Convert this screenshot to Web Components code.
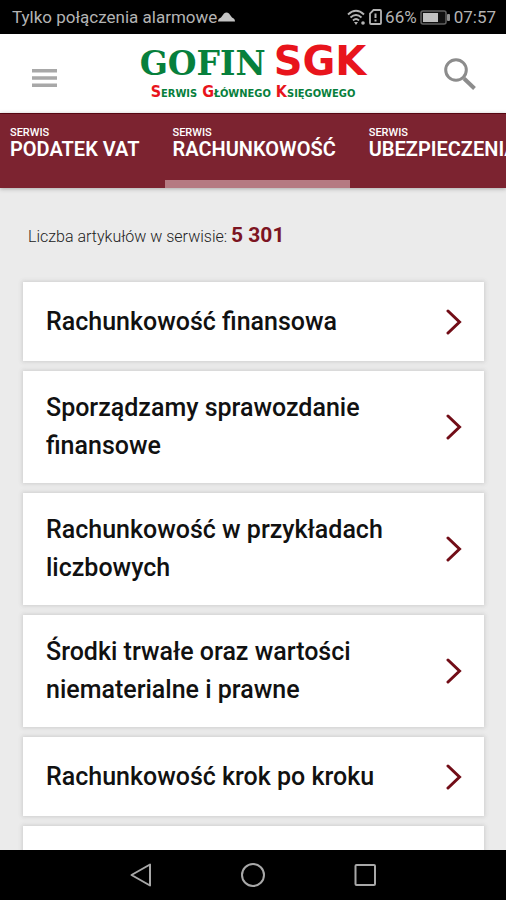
<!DOCTYPE html>
<html lang="pl">
<head>
<meta charset="utf-8">
<meta name="viewport" content="width=device-width, initial-scale=1">
<title>GOFIN SGK - Rachunkowość</title>
<style>
  body {
    margin: 0;
    height: 100vh;
    display: flex;
    flex-direction: column;
    overflow: hidden;
    background: #ebebeb;
    color: #111;
    font-family: Roboto, "Liberation Sans", sans-serif;
  }
  main {
    flex: 1;
    min-height: 0;
    overflow: hidden;
  }
</style>
</head>
<body>
  <status-bar battery="66%" time="07:57">Tylko połączenia alarmowe</status-bar>
  <app-header></app-header>
  <tab-bar>
    <tab-item kicker="SERWIS">PODATEK VAT</tab-item>
    <tab-item kicker="SERWIS" active>RACHUNKOWOŚĆ</tab-item>
    <tab-item kicker="SERWIS">UBEZPIECZENIA</tab-item>
  </tab-bar>
  <main>
    <article-count value="5 301">Liczba artykułów w serwisie:</article-count>
    <card-list>
      <card-link>Rachunkowość finansowa</card-link>
      <card-link>Sporządzamy sprawozdanie finansowe</card-link>
      <card-link>Rachunkowość w przykładach liczbowych</card-link>
      <card-link>Środki trwałe oraz wartości niematerialne i prawne</card-link>
      <card-link>Rachunkowość krok po kroku</card-link>
      <card-link></card-link>
    </card-list>
  </main>
  <system-nav></system-nav>

<script>
(function ( doc, w ) {
  /**
   * Build a template out of a string of styles and markup.
   */
  function template ( html ) {
    const t = doc.createElement('template');
    t.innerHTML = html;
    return t;
  }

  /**
   * Base class, stamps the template into an open shadow root.
   */
  class BaseElement extends HTMLElement {
    constructor () {
      super();
      this.attachShadow({ mode: 'open' });
      this.shadowRoot.appendChild(this.constructor.template.content.cloneNode(true));
    }

    $ ( selector ) {
      return this.shadowRoot.querySelector(selector);
    }
  }

  /**
   * Phone status bar
   */
  class StatusBar extends BaseElement {
    static template = template(`
      <style>
        :host {
          display: flex;
          align-items: center;
          height: 34px;
          flex: none;
          padding: 0 10px 0 12px;
          box-sizing: border-box;
          background: #000;
          color: #b4b4b4;
          font-size: 17px;
          line-height: 20px;
          white-space: nowrap;
        }
        svg { display: block; }
        .network { display: flex; align-items: center; gap: 1px; flex: 1; }
        .icons { display: flex; align-items: center; gap: 3px; }
      </style>
      <div class="network">
        <slot></slot>
        <svg width="17" height="10" viewBox="0 0 17 10" fill="#c4c4c4" aria-hidden="true"><path d="M0 9.500Q0 6.500 3 5.500L6 1.500Q8.500 -.5 11 1.500L14 5.500Q17 6.500 17 9.500Z"/></svg>
      </div>
      <div class="icons">
        <svg width="19" height="17" viewBox="0 0 19 17" fill="none" stroke="#b4b4b4" stroke-width="1.900" aria-hidden="true">
          <path d="M1 5.500Q9 -2 17 5.500M3.500 8.500Q9 3.500 14.500 8.500M6 11.500Q9 8.500 12 11.500"/>
          <path d="M7 13H11L9 16Z" fill="#b4b4b4" stroke="none"/>
          <circle cx="16" cy="14" r="1.800" fill="#b4b4b4" stroke="none"/>
        </svg>
        <svg width="13" height="16" viewBox="0 0 13 16" fill="none" stroke="#b4b4b4" stroke-width="1.800" aria-hidden="true">
          <path d="M4.500 1H11Q12 1 12 2V14Q12 15 11 15H2Q1 15 1 14V4.500Z"/>
          <path d="M6.500 4.500V9M6.500 10.500V12.500" stroke-width="2"/>
        </svg>
        <span class="level"></span>
        <svg width="31" height="15" viewBox="0 0 31 15" aria-hidden="true">
          <rect x="1" y="1" width="25" height="13" rx="2" fill="#111" stroke="#606060" stroke-width="1.500"/>
          <rect x="3" y="3" width="15" height="9" fill="#c0c0c0"/>
          <rect x="27" y="4" width="3" height="7" rx="1" fill="#909090"/>
        </svg>
        <time></time>
      </div>
    `);

    connectedCallback () {
      this.$('.level').textContent = this.getAttribute('battery');
      this.$('time').textContent = this.getAttribute('time');
    }
  }

  /**
   * White header: menu button, logo, search button
   */
  class AppHeader extends BaseElement {
    static template = template(`
      <style>
        :host {
          display: flex;
          align-items: center;
          justify-content: space-between;
          flex: none;
          height: 79px;
          padding: 0 24px;
          box-sizing: border-box;
          background: #fff;
        }
        button {
          display: flex;
          align-items: center;
          width: 40px;
          height: 48px;
          padding: 0;
          border: 0;
          background: none;
        }
        .menu { padding: 8px 0 0 8px; }
        .search { justify-content: flex-end; }
      </style>
      <button type="button" class="menu" aria-label="Menu">
        <svg width="25" height="18" viewBox="0 0 25 18" fill="#a8a8a8" aria-hidden="true"><path d="M0 0H25V3.500H0ZM0 7.200H25V10.700H0ZM0 14.400H25V17.900H0Z"/></svg>
      </button>
      <sgk-logo></sgk-logo>
      <button type="button" class="search" aria-label="Szukaj">
        <svg width="40" height="34" viewBox="0 0 40 34" fill="none" stroke="#8c8c8c" aria-hidden="true">
          <circle cx="14" cy="13" r="10.300" stroke-width="3"/>
          <path d="M22 21.500L32.500 31.500" stroke-width="4"/>
        </svg>
      </button>
    `);
  }

  class SgkLogo extends BaseElement {
    static template = template(`
      <style>
        :host { display: block; padding-bottom: 4px; color: #07803c; text-align: center; white-space: nowrap; }
        .name {
          display: flex;
          align-items: baseline;
          justify-content: center;
          gap: 8px;
          font: bold 33px/38px "DejaVu Serif", serif;
        }
        .short { color: #e8141c; font: bold 40px/38px "DejaVu Sans", sans-serif; }
        .full { font: bold 16px/18px "DejaVu Sans Condensed", "DejaVu Sans", sans-serif; font-variant: small-caps; }
        .full b { color: #e8141c; }
      </style>
      <div class="name"><span>GOFIN</span><span class="short">SGK</span></div>
      <div class="full"><b>S</b>erwis <b>G</b>łównego <b>K</b>sięgowego</div>
    `);
  }

  /**
   * Scrolling tabs
   */
  class TabBar extends BaseElement {
    static template = template(`
      <style>
        :host {
          display: flex;
          flex: none;
          gap: 11px;
          height: 75px;
          padding-left: 2px;
          box-sizing: border-box;
          overflow: hidden;
          background: #7c2330;
          border-top: 1px solid #560611;
          box-shadow: 0 1px 4px #aaa;
        }
      </style>
      <slot></slot>
    `);
  }

  class TabItem extends BaseElement {
    static template = template(`
      <style>
        :host { display: flex; flex: none; }
        a {
          display: flex;
          flex-direction: column;
          padding: 13px 14px 0 8px;
          border-bottom: 8px solid transparent;
          color: #fff;
          font-size: 20px;
          font-weight: 600;
          line-height: 20px;
          text-decoration: none;
          white-space: nowrap;
        }
        small { font-size: 11px; font-weight: 500; line-height: 12px; }
        :host([active]) a { border-color: #b57a82; }
      </style>
      <a href="#"><small></small><slot></slot></a>
    `);

    connectedCallback () {
      this.$('small').textContent = this.getAttribute('kicker');
      if ( this.hasAttribute('active') ) this.$('a').setAttribute('aria-current', 'page');
    }
  }

  class ArticleCount extends BaseElement {
    static template = template(`
      <style>
        :host { display: block; padding: 32px 28px 30px; color: #222; font-size: 16px; font-weight: 300; line-height: 30px; }
        strong { color: #7c1422; font-size: 21px; font-weight: 700; }
      </style>
      <slot></slot> <strong></strong>
    `);

    connectedCallback () {
      this.$('strong').textContent = this.getAttribute('value');
    }
  }

  /**
   * List of sections
   */
  class CardList extends BaseElement {
    static template = template(`
      <style>
        :host {
          display: flex;
          flex-direction: column;
          gap: 10px;
          padding: 0 22px 0 23px;
        }
      </style>
      <slot></slot>
    `);
  }

  class CardLink extends BaseElement {
    static template = template(`
      <style>
        :host { display: block; }
        a {
          display: flex;
          align-items: center;
          justify-content: space-between;
          gap: 24px;
          min-height: 79px;
          padding: 18px 22px 18px 23px;
          box-sizing: border-box;
          background: #fff;
          box-shadow: 0 0 4px 1px #cfcfcf;
          color: #111;
          font-size: 25px;
          font-weight: 500;
          line-height: 38px;
          text-decoration: none;
        }
        svg { flex: none; }
      </style>
      <a href="#">
        <span><slot></slot></span>
        <svg width="16" height="26" viewBox="0 0 16 26" fill="none" stroke="#720d17" stroke-width="3" stroke-linecap="round" aria-hidden="true"><path d="M2 2L13.500 13L2 24"/></svg>
      </a>
    `);
  }

  /**
   * Back, home and recents
   */
  class SystemNav extends BaseElement {
    static template = template(`
      <style>
        :host {
          display: flex;
          align-items: center;
          justify-content: center;
          flex: none;
          gap: 88px;
          height: 50px;
          background: #000;
        }
        button { display: flex; padding: 0; border: 0; background: none; }
      </style>
      <button type="button" aria-label="Wstecz">
        <svg width="24" height="24" viewBox="0 0 24 24" fill="none" stroke="#a8a8a8" stroke-width="2" stroke-linejoin="round"><path d="M21 1.500V22.500L2.500 12Z"/></svg>
      </button>
      <button type="button" aria-label="Ekran główny">
        <svg width="24" height="24" viewBox="0 0 24 24" fill="none" stroke="#a8a8a8" stroke-width="2"><circle cx="12" cy="12" r="11"/></svg>
      </button>
      <button type="button" aria-label="Ostatnie aplikacje">
        <svg width="24" height="24" viewBox="0 0 24 24" fill="none" stroke="#a8a8a8" stroke-width="2"><rect x="2.500" y="2" width="19.500" height="20" rx="1"/></svg>
      </button>
    `);
  }

  w.customElements.define('status-bar', StatusBar);
  w.customElements.define('app-header', AppHeader);
  w.customElements.define('sgk-logo', SgkLogo);
  w.customElements.define('tab-bar', TabBar);
  w.customElements.define('tab-item', TabItem);
  w.customElements.define('article-count', ArticleCount);
  w.customElements.define('card-list', CardList);
  w.customElements.define('card-link', CardLink);
  w.customElements.define('system-nav', SystemNav);
})( document, window );
</script>
</body>
</html>
